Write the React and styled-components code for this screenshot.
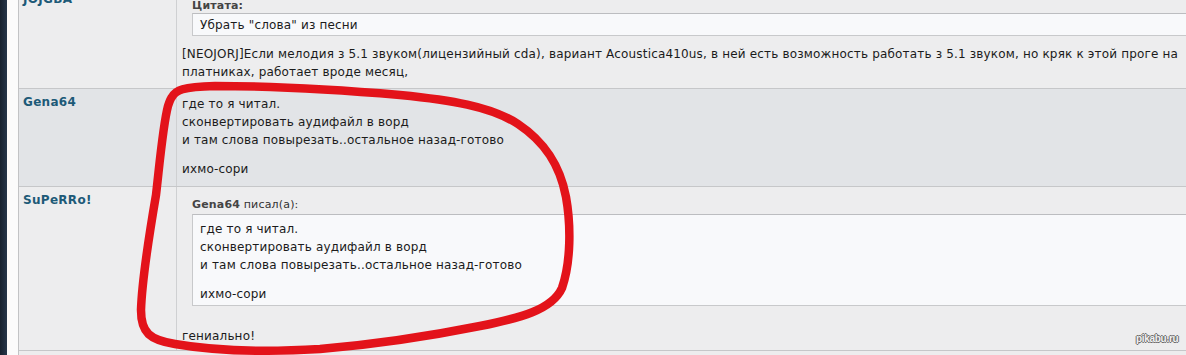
import React from "react";
import styled, { createGlobalStyle } from "styled-components";

const GlobalStyle = createGlobalStyle`
  html, body {
    margin: 0;
    padding: 0;
    overflow: hidden;
    background: #1d2939;
  }
  body {
    font-family: "DejaVu Sans", Verdana, sans-serif;
    font-size: 12px;
    letter-spacing: 0.17px;
    color: #1b1b1b;
  }
`;

const Page = styled.div`
  position: relative;
  display: flex;
  width: 1220px;
  height: 355px;
  overflow: hidden;
`;

const DarkEdge = styled.div`
  width: 7px;
  flex: none;
  background: linear-gradient(90deg, #17212e 0%, #26364a 100%);
`;

const Frame = styled.div`
  flex: 1;
  background: #fbfbfb;
  padding-left: 11px;
`;

const Table = styled.div`
  margin-top: -14px;
  border-left: 1px solid #c2c3c5;
`;

const Row = styled.div`
  display: grid;
  grid-template-columns: 158px 1fr;
  height: ${(p) => p.$height}px;
  background: ${(p) => (p.$alt ? "#e2e4e7" : "#ededee")};
  border-bottom: 1px solid #c6c7c9;
`;

const NameCell = styled.div`
  border-right: 1px solid #cfd0d2;
  padding: 6px 4px;
`;

const Name = styled.span`
  font-weight: bold;
  color: #1d5a78;
  font-size: 12px;
  letter-spacing: 0.3px;
`;

const PostCell = styled.div`
  padding: ${(p) => p.$top}px 5px 0 5px;
  line-height: 18px;
`;

const QuoteHead = styled.div`
  margin-left: 10px;
  color: #333;
  font-size: 11px;
  line-height: 14px;
  b {
    color: #444;
  }
`;

const QuoteBox = styled.div`
  margin: ${(p) => p.$mt}px 0 0 10px;
  background: #f8f9fb;
  border: 1px solid #c8c9cb;
  border-top-color: #bcbdc0;
  padding: ${(p) => p.$pad};
  line-height: 18px;
`;

const Text = styled.div`
  margin-top: ${(p) => p.$mt || 0}px;
`;

const Gap = styled.div`
  height: ${(p) => p.$h}px;
`;

const Overlay = styled.svg`
  position: absolute;
  left: 0;
  top: 0;
  pointer-events: none;
`;

const Watermark = styled.span`
  position: absolute;
  left: 1136px;
  top: 333px;
  font-family: "Liberation Sans", Arial, sans-serif;
  font-size: 10px;
  font-weight: bold;
  letter-spacing: -0.3px;
  color: #f2f2f2;
  text-shadow: -1px 0 #6a6a6a, 1px 0 #6a6a6a, 0 -1px #6a6a6a, 0 1px #6a6a6a;
`;

const Lines = ({ items }) =>
  items.map((line, i) => <div key={i}>{line}</div>);

const geniusQuote = [
  "где то я читал.",
  "сконвертировать аудифайл в ворд",
  "и там слова повырезать..остальное назад-готово",
];

export default function App() {
  return (
    <>
      <GlobalStyle />
      <Page>
        <DarkEdge />
        <Frame>
          <Table>
            <Row $height={102}>
              <NameCell>
                <Name>JOJGBA</Name>
              </NameCell>
              <PostCell $top={13}>
                <QuoteHead>
                  <b>Цитата:</b>
                </QuoteHead>
                <QuoteBox $mt={0} $pad="2px 7px 1px 7px">
                  Убрать "слова" из песни
                </QuoteBox>
                <Text $mt={9}>
                  [NEOJORJ]Если мелодия з 5.1 звуком(лицензийный cda), вариант
                  Acoustica410us, в ней есть возможность работать з 5.1 звуком, но
                  кряк к этой проге на платниках, работает вроде месяц,
                </Text>
              </PostCell>
            </Row>
            <Row $alt $height={97}>
              <NameCell>
                <Name>Gena64</Name>
              </NameCell>
              <PostCell $top={6}>
                <Lines items={geniusQuote} />
                <Gap $h={11} />
                <div>ихмо-сори</div>
              </PostCell>
            </Row>
            <Row $height={163}>
              <NameCell>
                <Name>SuPeRRo!</Name>
              </NameCell>
              <PostCell $top={11}>
                <QuoteHead>
                  <b>Gena64</b> писал(а):
                </QuoteHead>
                <QuoteBox $mt={2} $pad="5px 7px 2px 7px">
                  <Lines items={geniusQuote} />
                  <Gap $h={11} />
                  <div>ихмо-сори</div>
                </QuoteBox>
                <Text $mt={21}>гениально!</Text>
              </PostCell>
            </Row>
            <Row $height={20} />
          </Table>
        </Frame>
        <Overlay width="1186" height="355" viewBox="0 0 1186 355">
          <path
            d="M172 97 C176 90 182 87 215 86 C260 86 330 89 400 95 C450 100 490 106 518 124 C545 142 560 165 566 197 C571 225 571 262 562 288 C552 310 520 318 480 326 C430 336 380 344 320 349 C270 352 215 351 175 344 C150 340 141 333 141 310 C142 280 150 230 156 195 C160 160 163 125 168 106 C170 100 171 98 172 97 Z"
            fill="none"
            stroke="#e3131a"
            strokeWidth="8.5"
            strokeLinejoin="round"
          />
        </Overlay>
        <Watermark>pikabu.ru</Watermark>
      </Page>
    </>
  );
}
